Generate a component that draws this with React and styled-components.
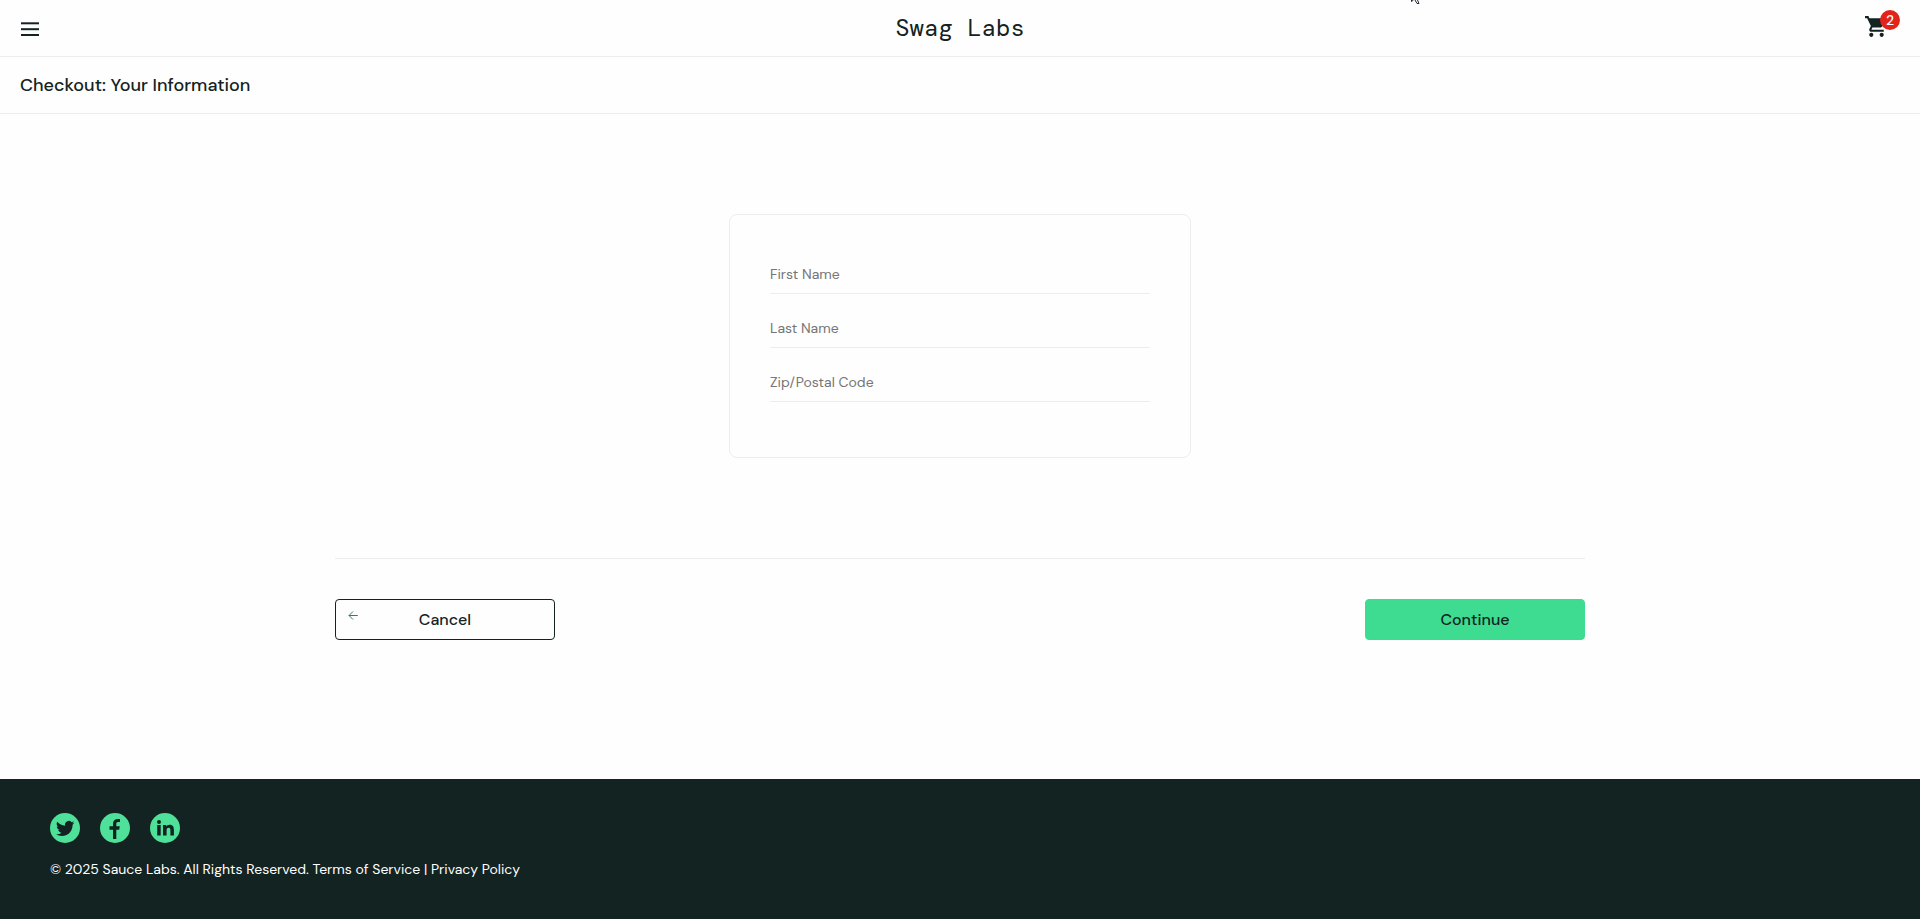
import React, { useState } from 'react';
import styled, { createGlobalStyle } from 'styled-components'
import { MdShoppingCart } from 'react-icons/md'


const GlobalStyle = createGlobalStyle`
    * {
        box-sizing: border-box;
    }
    body {
        margin: 0;
        background-color: #fefefe;
        color: #132322;
        font-family: "DM Sans", Inter, "Liberation Sans", sans-serif;
    }
`
const Page = styled.div`
    display: flex;
    flex-direction: column;
    min-height: 100vh;
`
const Header = styled.header`
    display: grid;
    grid-template-columns: 1fr auto 1fr;
    align-items: center;
    height: 57px;
    padding: 0 20px;
    border-bottom: 1px solid #ededed;
`
const MenuButton = styled.button`
    display: flex;
    justify-self: start;
    padding: 0;
    border: none;
    background: none;
    cursor: pointer;
`
const Logo = styled.div`
    font-family: "DM Mono", "Liberation Mono", monospace;
    font-size: 24px;
    line-height: 32px;
`
const CartLink = styled.a`
    position: relative;
    display: flex;
    justify-self: end;
    width: 40px;
    height: 40px;
    padding: 6px 4px;
    color: #132322;
`
const CartBadge = styled.span`
    position: absolute;
    top: 2px;
    right: 0;
    width: 20px;
    height: 20px;
    border-radius: 50%;
    background-color: #e2231a;
    color: white;
    font-size: 14px;
    font-weight: 500;
    line-height: 20px;
    text-align: center;
`
const SubHeader = styled.div`
    display: flex;
    align-items: center;
    height: 57px;
    padding: 0 20px;
    border-bottom: 1px solid #ededed;
`
const Title = styled.h1`
    margin: 0;
    font-size: 18px;
    font-weight: 500;
    line-height: 24px;
`
const Form = styled.form`
    flex: 1;
    width: 100%;
    max-width: 1250px;
    margin: 0 auto;
    padding: 100px 0;
`
const Card = styled.div`
    max-width: 462px;
    margin: 0 auto 100px;
    padding: 40px;
    border: 1px solid #ededed;
    border-radius: 8px;
`
const Field = styled.input`
    display: block;
    width: 100%;
    height: 39px;
    margin-bottom: 15px;
    padding: 0;
    border: none;
    border-bottom: 1px solid #ededed;
    background: none;
    color: #132322;
    font-family: inherit;
    font-size: 14px;
    outline: none;
    &::placeholder {
        color: #757575;
    }
`
const Actions = styled.div`
    display: flex;
    justify-content: space-between;
    padding-top: 40px;
    border-top: 1px solid #ededed;
`
const Button = styled.button`
    position: relative;
    width: 220px;
    height: 41px;
    border: 1px solid ${props => props.$primary ? '#3ddc91' : '#132322'};
    border-radius: 4px;
    background-color: ${props => props.$primary ? '#3ddc91' : '#fefefe'};
    color: #132322;
    font-family: inherit;
    font-size: 16px;
    font-weight: 500;
    cursor: pointer;
`
const BackArrow = styled.svg`
    position: absolute;
    top: 11px;
    left: 12px;
`
const Footer = styled.footer`
    height: 140px;
    padding: 34px 50px 0;
    background-color: #132322;
    color: white;
`
const SocialList = styled.ul`
    display: flex;
    gap: 20px;
    margin: 0 0 16px;
    padding: 0;
    list-style: none;
`
const SocialLink = styled.a`
    display: block;
    height: 30px;
`
const Copyright = styled.div`
    font-size: 14px;
    line-height: 20px;
`
const Pointer = styled.svg`
    position: absolute;
    top: 0;
    left: 50%;
    margin-left: 450px;
    pointer-events: none;
`

const fields = [
    { name: 'firstName', label: 'First Name' },
    { name: 'lastName', label: 'Last Name' },
    { name: 'postalCode', label: 'Zip/Postal Code' },
]

const socials = [
    {
        name: 'Twitter',
        path: 'M24.500 9.700c-.7.3-1.400.5-2.200.6.8-.5 1.300-1.200 1.600-2-.7.4-1.500.7-2.300.9a3.800 3.800 0 0 0-6.500 3.500c-3.100-.2-5.900-1.700-7.800-4a3.800 3.800 0 0 0 1.200 5.100c-.6 0-1.200-.2-1.700-.5 0 1.900 1.300 3.500 3 3.800-.5.1-1.100.1-1.700 0 .5 1.500 1.900 2.600 3.500 2.600A7.600 7.600 0 0 1 6 21.300a10.800 10.800 0 0 0 5.800 1.700c7 0 11-5.900 10.800-11.300.7-.5 1.400-1.200 1.900-2z',
    },
    {
        name: 'Facebook',
        path: 'M13 26v-9.300H9.500v-3.500H13v-2.500c0-3.200 1.900-4.800 4.700-4.800 1.300 0 2.300.1 2.300.1v3.100h-1.800c-1.500 0-1.900.8-1.900 1.700v2.400h3.500l-.6 3.500h-2.900V26z',
    },
    {
        name: 'LinkedIn',
        path: 'M7.200 12h3.500V22.600H7.200zM9 7.100a2 2 0 1 1 0 4 2 2 0 0 1 0-4zM13 12h3.300v1.500c.5-.9 1.600-1.800 3.400-1.800 3.500 0 4.200 2.300 4.200 5.200v5.700h-3.500v-5.100c0-1.200 0-2.800-1.700-2.800s-2.100 1.300-2.100 2.700v5.200H13z',
    },
]

const App = () => {
    const [values, setValues] = useState({})
    const handleChange = (e) => { setValues({ ...values, [e.target.name]: e.target.value }) }

    return(
        <Page>
            <GlobalStyle />
            <Header>
                <MenuButton type="button" aria-label="Open Menu">
                    <svg width="20" height="20" viewBox="0 0 20 20" fill="#132322">
                        <rect x="1" y="4.300" width="18" height="2" />
                        <rect x="1" y="10.200" width="18" height="2" />
                        <rect x="1" y="16" width="18" height="2" />
                    </svg>
                </MenuButton>
                <Logo>Swag Labs</Logo>
                <CartLink href="#cart" aria-label="Cart, 2 items">
                    <MdShoppingCart size={25} />
                    <CartBadge>2</CartBadge>
                </CartLink>
            </Header>
            <SubHeader>
                <Title>Checkout: Your Information</Title>
            </SubHeader>
            <Form onSubmit={e => e.preventDefault()}>
                <Card>
                    {fields.map(field => (
                        <Field
                            key={field.name}
                            name={field.name}
                            placeholder={field.label}
                            aria-label={field.label}
                            value={values[field.name] || ''}
                            onChange={handleChange}
                        />
                    ))}
                </Card>
                <Actions>
                    <Button type="button">
                        <BackArrow width="10" height="10" viewBox="0 0 10 10" fill="none" stroke="#2f7d62" strokeWidth="1">
                            <path d="M9.800 4.500H1M5 .5L1 4.500 5 8.500" />
                        </BackArrow>
                        Cancel
                    </Button>
                    <Button type="submit" $primary>Continue</Button>
                </Actions>
            </Form>
            <Footer>
                <SocialList>
                    {socials.map(social => (
                        <li key={social.name}>
                            <SocialLink href={`#${social.name.toLowerCase()}`} aria-label={social.name}>
                                <svg width="30" height="30" viewBox="0 0 30 30">
                                    <circle cx="15" cy="15" r="15" fill="#4fe09a" />
                                    <path d={social.path} fill="#132322" />
                                </svg>
                            </SocialLink>
                        </li>
                    ))}
                </SocialList>
                <Copyright>© 2025 Sauce Labs. All Rights Reserved. Terms of Service | Privacy Policy</Copyright>
            </Footer>
            <Pointer width="12" height="5" viewBox="0 0 12 5" fill="none" stroke="#222831" aria-hidden="true">
                <path d="M1.500 0v1.500l2-1.500M5 0l2 3.500h2L7.500 0" />
            </Pointer>
        </Page>
    )
}

export default App
